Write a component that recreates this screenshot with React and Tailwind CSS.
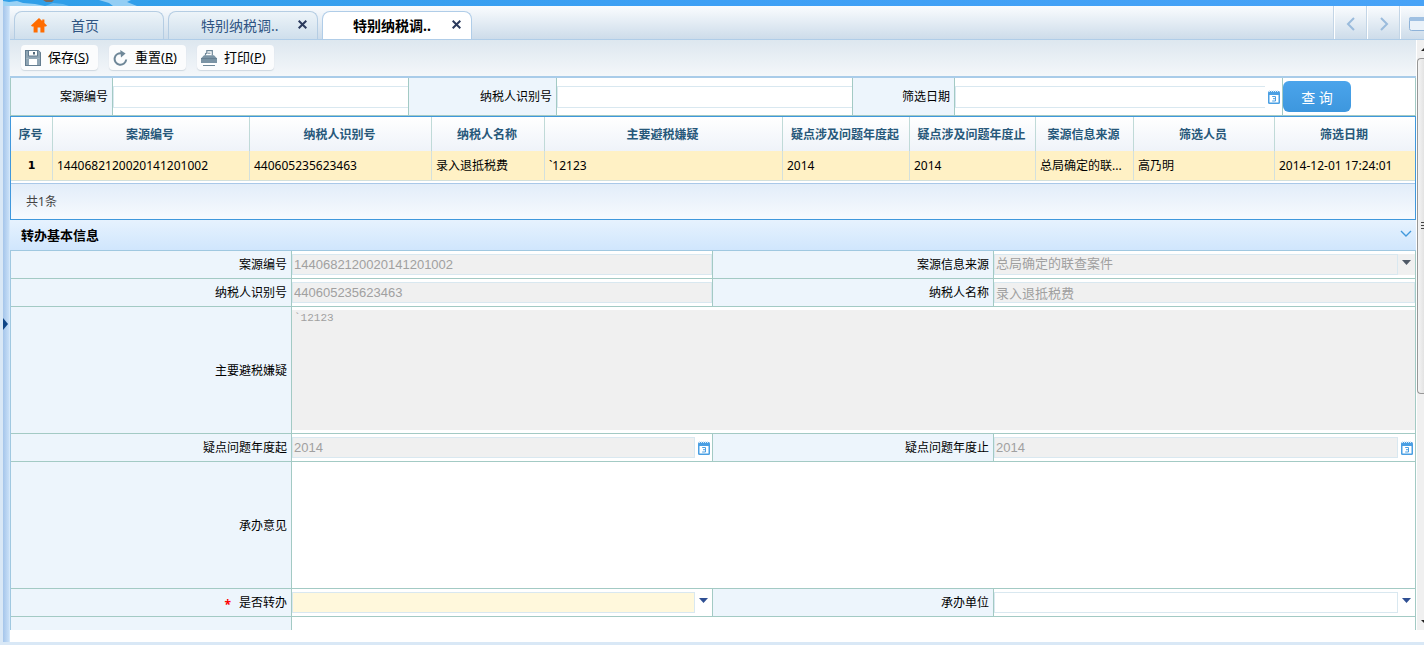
import { useState } from "react";

const LATIN = "font-['Noto_Sans','Noto_Sans_CJK_SC',sans-serif]";

const columns = [
  { title: "序号", width: 42 },
  { title: "案源编号", width: 197 },
  { title: "纳税人识别号", width: 182 },
  { title: "纳税人名称", width: 113 },
  { title: "主要避税嫌疑" },
  { title: "疑点涉及问题年度起", width: 127 },
  { title: "疑点涉及问题年度止", width: 126 },
  { title: "案源信息来源", width: 98 },
  { title: "筛选人员", width: 141 },
  { title: "筛选日期", width: 140 },
];

const rows = [
  [
    "1440682120020141201002",
    "440605235623463",
    "录入退抵税费",
    "`12123",
    "2014",
    "2014",
    "总局确定的联...",
    "高乃明",
    "2014-12-01 17:24:01",
  ],
];

/* ---------- icons ---------- */

function HomeIcon() {
  return (
    <svg width="16" height="15" viewBox="0 0 16 15" fill="#ff6c00">
      <path d="M8 0 0 7.4 1 8.6h1.6V14.5h4V9.4h2.8v5.1h4V8.6H15l1-1.2-2.6-2.5V1.4h-2.2v1.5z" />
    </svg>
  );
}

function SaveIcon() {
  return (
    <svg width="16" height="16" viewBox="0 0 16 16">
      <path d="M.6.6h12.6l2.2 2.2v12.6H.6z" fill="#fff" stroke="#647d90" strokeWidth="1.2" />
      <path d="M1 6h14v2.6H1z" fill="#8fa5b4" />
      <path d="M1 8.5h2.4V15H1zM12.6 8.5H15V15h-2.4zM1 1h2v6H1zM12.8 1.2 15 3v4h-2.2z" fill="#8fa5b4" />
      <path d="M3.5 1v5h9V1" fill="#fff" stroke="#647d90" />
      <path d="M8 2h2v2.5H8z" fill="#51687a" />
      <path d="M3.5 15V8.5h9V15" fill="#fff" stroke="#8fa5b4" />
    </svg>
  );
}

function ResetIcon() {
  return (
    <svg width="15" height="16" viewBox="0 0 15 16" fill="none">
      <path d="M13.2 9.5A5.8 5.8 0 1 1 9 3.4" stroke="#6e8798" strokeWidth="2" />
      <path d="M7.2 0 12.6 3.4 8 7.4z" fill="#6e8798" />
    </svg>
  );
}

function PrintIcon() {
  return (
    <svg width="16" height="16" viewBox="0 0 16 16">
      <path d="M4.5 5.5V3.6L5.8 3V.7h5.5v4.8" fill="#fff" stroke="#6e8798" strokeWidth="1.2" />
      <path d="M6.5 3.2h3" stroke="#6e8798" />
      <path d="M3 5.2h10L16 8.5V13H0V8.5z" fill="#7b94a5" />
      <path d="M0 8.6h16" stroke="#647d90" />
      <path d="M2 13h12v2H2z" fill="#fff" />
      <path d="M2 15.5h12" stroke="#6e8798" />
    </svg>
  );
}

function CalendarIcon() {
  return (
    <svg width="12" height="14" viewBox="0 0 12 14">
      <rect y="1" width="12" height="13" rx="1.5" fill="#4a9fe3" />
      <path d="M1.5 5h9v7.5h-9z" fill="#fff" />
      <path d="M1 1h10" stroke="#d5e9f9" strokeWidth="2" strokeDasharray="1 1" />
      <path d="M4.2 6.5h3.3v4.5H4.2M5 8.7h2.5" fill="none" stroke="#4a9fe3" />
    </svg>
  );
}

function Caret({ color }) {
  return (
    <svg width="9" height="5" viewBox="0 0 9 5" fill={color}>
      <path d="M0 0h9L4.5 5z" />
    </svg>
  );
}

function Chevron({ d, color }) {
  return (
    <svg width="12" height="14" viewBox="0 0 12 14" fill="none" stroke={color} strokeWidth="2">
      <path d={d} />
    </svg>
  );
}

/* ---------- tabs and toolbar ---------- */

function Tab({ label, active, home, onSelect }) {
  return (
    <div
      className={`flex h-full w-[150px] items-center rounded-t-lg border border-b-0 ${
        active
          ? "border-[#b0cde8] bg-white font-bold text-black"
          : "border-[#b5cde3] bg-linear-to-b from-[#edf4f9] to-[#cfdfec] text-[#2f5482]"
      }`}
    >
      {home && (
        <span className="ml-4">
          <HomeIcon />
        </span>
      )}
      <button
        type="button"
        onClick={onSelect}
        className={`text-left text-sm leading-7 whitespace-nowrap ${home ? "ml-6" : active ? "ml-[30px] w-[99px]" : "ml-8 w-[97px]"}`}
      >
        {label}
      </button>
      {!home && (
        <button type="button" aria-label="关闭" className="pb-0.5">
          <svg width="9" height="9" viewBox="0 0 9 9" stroke="#2b3a5c" strokeWidth="2">
            <path d="M.7.7l7.6 7.6M8.3.7.7 8.3" />
          </svg>
        </button>
      )}
    </div>
  );
}

function TabBar() {
  const [active, setActive] = useState(2);
  const tabs = ["首页", "特别纳税调..", "特别纳税调.."];

  return (
    <nav className="flex h-[34px] shrink-0 border-b border-[#b0cde8] bg-linear-to-b from-[#fafcfe] to-[#cddcea]">
      <div className="flex flex-1 gap-1 pt-[5px] pl-1">
        {tabs.map((label, i) => (
          <Tab key={i} label={label} home={i === 0} active={i === active} onSelect={() => setActive(i)} />
        ))}
      </div>
      <button type="button" aria-label="向左" className="flex w-[33px] items-center justify-center border-l border-white pt-0.5 shadow-[-1px_0_0_#c3d5e6]">
        <Chevron d="M9 1 3 7l6 6" color="#9abbdc" />
      </button>
      <button type="button" aria-label="向右" className="flex w-[33px] items-center justify-center border-l border-white pt-0.5 shadow-[-1px_0_0_#c3d5e6]">
        <Chevron d="M3 1l6 6-6 6" color="#9abbdc" />
      </button>
      <button type="button" aria-label="窗口" className="flex w-6 items-center overflow-hidden border-l border-white pt-0.5 pl-2 shadow-[-1px_0_0_#c3d5e6]">
        <svg width="18" height="14" viewBox="0 0 18 14" className="shrink-0">
          <rect x=".5" y=".5" width="17" height="13" rx="2" fill="#eaf2f9" stroke="#8fb3d9" />
          <path d="M0 4V2a2 2 0 0 1 2-2h14a2 2 0 0 1 2 2v2z" fill="#9fc0e2" />
        </svg>
      </button>
    </nav>
  );
}

function ToolButton({ icon, label, hotkey }) {
  return (
    <button
      type="button"
      className="flex h-[25px] w-[77px] items-center gap-[7px] rounded-sm bg-[#fbfcfd] pl-1 text-[13px] leading-5 whitespace-nowrap text-black shadow-[0_1px_1px_#cfd8df]"
    >
      {icon}
      <span className="pb-0.5">
        {label}(<u>{hotkey}</u>)
      </span>
    </button>
  );
}

/* ---------- form parts ---------- */

function LabelCell({ htmlFor, required, children }) {
  return (
    <div className="flex items-center justify-end border-r border-b border-[#a3cac4] bg-[#edf5fc] pt-px pr-1">
      {required && <span className="mr-2 pt-1 font-bold text-[#f00]">*</span>}
      <label htmlFor={htmlFor}>{children}</label>
    </div>
  );
}

const formRow = "grid auto-rows-[28px] grid-cols-[281fr_421fr_281fr_422fr] border-l border-[#a0c8e0]";
const wideRow = "grid grid-cols-[20%_80%] border-l border-[#a0c8e0]";
const fieldCell = "flex border-r border-b border-[#a3cac4] bg-white py-[3px]";
const fieldBox =
  "h-[21px] min-w-0 flex-1 appearance-none border border-[#d9e8f0] px-px font-['Liberation_Sans','Noto_Sans_CJK_SC',sans-serif] text-[13px] leading-[18px] outline-none disabled:bg-[#f0f0f0] disabled:text-[#a0a0a0] disabled:opacity-100";

function TextCell({ id, value }) {
  return (
    <div className={fieldCell}>
      <input id={id} className={fieldBox} defaultValue={value} disabled />
    </div>
  );
}

function DateCell({ id, value }) {
  return (
    <div className={fieldCell}>
      <input id={id} className={fieldBox} defaultValue={value} disabled />
      <button type="button" aria-label="选择日期" className="flex w-[17px] items-center pl-[3px]">
        <CalendarIcon />
      </button>
    </div>
  );
}

function SelectCell({ id, value, disabled, highlight }) {
  return (
    <div className={fieldCell}>
      <select id={id} className={`${fieldBox} pb-0.5 ${highlight ? "bg-[#fff8dc]" : ""}`} defaultValue={value} disabled={disabled}>
        <option value={value}>{value}</option>
      </select>
      <span className={`flex w-[17px] justify-center pt-[6px] ${disabled ? "bg-[#f0f0f0]" : ""}`}>
        <Caret color={disabled ? "#4f5966" : "#2f4f93"} />
      </span>
    </div>
  );
}

function QueryField({ id, label, date }) {
  return (
    <>
      <div className="flex items-center justify-end border-r border-[#a3cac4] bg-[#edf5fc] pt-px pr-1">
        <label htmlFor={id}>{label}</label>
      </div>
      <div className="flex items-center border-r border-[#a3cac4]">
        <input id={id} className="h-[22px] min-w-0 flex-1 border border-r-0 border-[#d9e8f0] px-1 outline-none" />
        {date && (
          <button type="button" aria-label="选择日期" className="flex w-[17px] pl-[3px]">
            <CalendarIcon />
          </button>
        )}
      </div>
    </>
  );
}

/* ---------- page sections ---------- */

function QueryBar() {
  return (
    <form className="grid h-[38px] grid-cols-[102px_1fr_148px_1fr_102px_328px_132px] border-r border-b border-l border-[#a3cac4]">
      <QueryField id="q-case" label="案源编号" />
      <QueryField id="q-taxpayer" label="纳税人识别号" />
      <QueryField id="q-date" label="筛选日期" date />
      <div className="flex items-center">
        <button
          type="button"
          className="h-[31px] w-[68px] rounded-md bg-linear-to-b from-[#4ba4eb] to-[#3d97de] pt-0.5 text-sm leading-5 text-white"
        >
          查 询
        </button>
      </div>
    </form>
  );
}

function ResultTable() {
  return (
    <section className="border border-[#4098dc]">
      <table className="w-full table-fixed border-separate border-spacing-0">
        <colgroup>
          {columns.map((c) => (
            <col key={c.title} style={c.width ? { width: c.width } : undefined} />
          ))}
        </colgroup>
        <thead>
          <tr className="h-[34px] bg-linear-to-b from-white to-[#eff3f9] text-[#27587a]">
            {columns.map((c) => (
              <th key={c.title} className="border-r border-[#c0dad8] pt-0.5 pr-0.5 pb-0 pl-0 font-bold whitespace-nowrap last:border-r-0">
                {c.title}
              </th>
            ))}
          </tr>
        </thead>
        <tbody>
          {rows.map((row, i) => (
            <tr key={row[0]} className="h-[30px] bg-[#fff1c5]">
              <td className="border-r border-b border-[#d3e0dd] pt-0.5 text-center font-['DejaVu_Sans',sans-serif] text-[11px] font-bold">
                {i + 1}
              </td>
              {row.map((text, j) => (
                <td key={j} className="border-r border-b border-[#d3e0dd] py-0 pl-1 whitespace-nowrap last:border-r-0">
                  {text}
                </td>
              ))}
            </tr>
          ))}
        </tbody>
      </table>
      <div className="mt-0.5 flex h-9 items-center border-t border-[#a9c8e8] bg-linear-to-b from-[#e2edf9] to-[#f7fafe] pl-[15px] text-[#444]">
        共{rows.length}条
      </div>
    </section>
  );
}

function TransferForm() {
  return (
    <section>
      <header className="flex h-[31px] items-center justify-between border-b border-[#a0c8e0] bg-linear-to-b from-[#e6f2fe] to-[#d0e6fd] pr-1 pl-[11px]">
        <h2 className="pt-0.5 text-[13px] font-bold">转办基本信息</h2>
        <button type="button" aria-label="收起" className="pb-1">
          <svg width="12" height="7" viewBox="0 0 12 7" fill="none" stroke="#4098dc" strokeWidth="1.4">
            <path d="M1 1l5 5 5-5" />
          </svg>
        </button>
      </header>
      <form>
        <div className={formRow}>
          <LabelCell htmlFor="caseNo">案源编号</LabelCell>
          <TextCell id="caseNo" value="1440682120020141201002" />
          <LabelCell htmlFor="source">案源信息来源</LabelCell>
          <SelectCell id="source" value="总局确定的联查案件" disabled />

          <LabelCell htmlFor="taxpayerNo">纳税人识别号</LabelCell>
          <TextCell id="taxpayerNo" value="440605235623463" />
          <LabelCell htmlFor="taxpayerName">纳税人名称</LabelCell>
          <TextCell id="taxpayerName" value="录入退抵税费" />
        </div>
        <div className={wideRow}>
          <LabelCell htmlFor="suspicion">主要避税嫌疑</LabelCell>
          <div className={fieldCell}>
            <textarea
              id="suspicion"
              disabled
              defaultValue="`12123"
              className="h-[120px] flex-1 resize-none bg-[#f0f0f0] px-0.5 font-['Liberation_Mono',monospace] text-[11px] leading-4 text-[#a0a0a0]"
            />
          </div>
        </div>
        <div className={formRow}>
          <LabelCell htmlFor="yearFrom">疑点问题年度起</LabelCell>
          <DateCell id="yearFrom" value="2014" />
          <LabelCell htmlFor="yearTo">疑点问题年度止</LabelCell>
          <DateCell id="yearTo" value="2014" />
        </div>
        <div className={wideRow}>
          <LabelCell htmlFor="opinion">承办意见</LabelCell>
          <div className={fieldCell}>
            <textarea id="opinion" className="h-[120px] flex-1 resize-none px-0.5 text-[13px] outline-none" />
          </div>
        </div>
        <div className={formRow}>
          <LabelCell htmlFor="transfer" required>
            是否转办
          </LabelCell>
          <SelectCell id="transfer" value="" highlight />
          <LabelCell htmlFor="unit">承办单位</LabelCell>
          <SelectCell id="unit" value="" />
        </div>
        <div className={`${wideRow} h-32`}>
          <div className="border-r border-[#a3cac4] bg-[#edf5fc]" />
          <div className="border-r border-[#a3cac4]" />
        </div>
      </form>
    </section>
  );
}

function ScrollBar() {
  return (
    <div className="flex w-[7px] shrink-0 flex-col justify-between overflow-hidden bg-[#f0f0f0]">
      <div className="flex h-[354px] flex-col">
        <div className="flex h-[18px] items-center justify-end">
          <svg width="3" height="3" fill="#222">
            <path d="M3 0v3H0z" />
          </svg>
        </div>
        <div className="flex flex-1 items-center justify-end rounded-l-sm border border-r-0 border-[#979797] bg-linear-to-r from-[#f5f5f5] to-[#e3e3e3]">
          <svg width="3" height="8" stroke="#444">
            <path d="M0 .5h4M0 3.5h4M0 6.5h4" />
          </svg>
        </div>
      </div>
      <div className="flex h-[18px] items-center justify-end">
        <svg width="3" height="3" fill="#222">
          <path d="M0 0h3v3z" />
        </svg>
      </div>
    </div>
  );
}

export default function App() {
  return (
    <div className={`flex h-screen flex-col overflow-hidden bg-[#d9e8f6] text-xs text-black ${LATIN}`}>
      {/* lower edge of the sky banner */}
      <div className="ml-[3px] h-1.5 shrink-0 bg-linear-to-r from-[#2f9fe8] via-[#3ea0f5] to-[#48a3f7]">
        <svg width="180" height="6" viewBox="0 0 180 6">
          <path d="M0 6V1l6 1 8-1 6 2 12 1 10 2z" fill="#b5def7" opacity=".8" />
          <path d="M42 6l8-3 10 1 6 2z" fill="#7cc4f2" opacity=".7" />
          <path d="M96 0h32l-4 2 10 4h-24l-4-3z" fill="#b5def7" opacity=".75" />
          <path d="M40 0h11l-2 2h-6z" fill="#7d6a5c" />
        </svg>
      </div>

      <div className="flex min-h-0 flex-1">
        <aside className="flex w-[10px] shrink-0 items-center border-r border-[#d4e8fb] pl-[3px]">
          <div className="flex h-full w-full items-center bg-linear-to-r from-[#a5c5ea] to-[#c8e0f8]">
            <button type="button" aria-label="展开">
              <svg width="5" height="12" viewBox="0 0 5 12">
                <path d="M0 0l5 6-5 6z" fill="#0f4586" />
              </svg>
            </button>
          </div>
        </aside>

        <main className="flex min-w-0 flex-1 flex-col bg-white pb-3">
          <TabBar />
          <div className="flex min-h-0 flex-1">
            <div className="mr-px min-w-0 flex-1 overflow-hidden">
              <div className="flex h-[38px] gap-[11px] border-b-2 border-[#a9cce9] bg-linear-to-b from-[#dde7ef] to-[#f4f7fa] pt-[5px] pl-[11px]">
                <ToolButton icon={<SaveIcon />} label="保存" hotkey="S" />
                <ToolButton icon={<ResetIcon />} label="重置" hotkey="R" />
                <ToolButton icon={<PrintIcon />} label="打印" hotkey="P" />
              </div>
              <QueryBar />
              <ResultTable />
              <TransferForm />
            </div>
            <ScrollBar />
          </div>
        </main>
      </div>

      <footer className="h-[3px] shrink-0" />
    </div>
  );
}
